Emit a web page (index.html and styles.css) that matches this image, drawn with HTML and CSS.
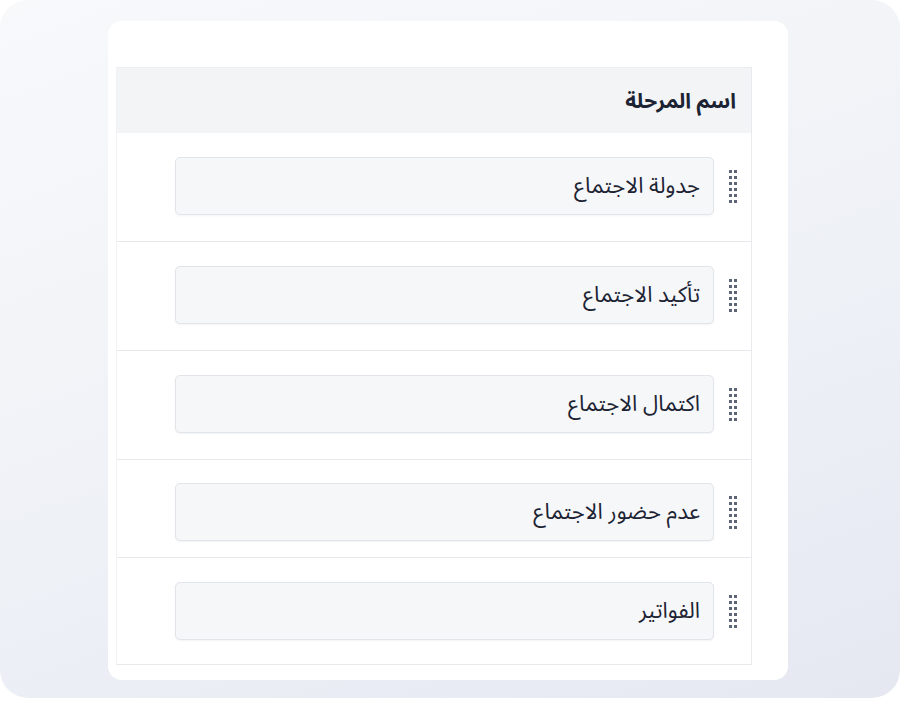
FILE: index.html
```html
<!DOCTYPE html>
<html lang="ar">
<head>
    <meta charset="UTF-8">
    <meta name="viewport" content="width=device-width, initial-scale=1.0">
    <title>المراحل</title>
    <link rel="stylesheet" href="styles.css">
</head>
<body>
    <div class="frame">
        <div class="card">
            <div class="stages" dir="rtl">
                <div class="stages-head">اسم المرحلة</div>

                <div class="stage-row">
                    <span class="handle">
                        <svg width="8" height="33" viewBox="0 0 8 33"><g fill="#5b6577"><rect x="0" y="0" width="3" height="3"/><rect x="5" y="0" width="3" height="3"/><rect x="0" y="6" width="3" height="3"/><rect x="5" y="6" width="3" height="3"/><rect x="0" y="12" width="3" height="3"/><rect x="5" y="12" width="3" height="3"/><rect x="0" y="18" width="3" height="3"/><rect x="5" y="18" width="3" height="3"/><rect x="0" y="24" width="3" height="3"/><rect x="5" y="24" width="3" height="3"/><rect x="0" y="30" width="3" height="3"/><rect x="5" y="30" width="3" height="3"/></g></svg>
                    </span>
                    <input type="text" class="stage-input" value="جدولة الاجتماع">
                </div>

                <div class="stage-row">
                    <span class="handle">
                        <svg width="8" height="33" viewBox="0 0 8 33"><g fill="#5b6577"><rect x="0" y="0" width="3" height="3"/><rect x="5" y="0" width="3" height="3"/><rect x="0" y="6" width="3" height="3"/><rect x="5" y="6" width="3" height="3"/><rect x="0" y="12" width="3" height="3"/><rect x="5" y="12" width="3" height="3"/><rect x="0" y="18" width="3" height="3"/><rect x="5" y="18" width="3" height="3"/><rect x="0" y="24" width="3" height="3"/><rect x="5" y="24" width="3" height="3"/><rect x="0" y="30" width="3" height="3"/><rect x="5" y="30" width="3" height="3"/></g></svg>
                    </span>
                    <input type="text" class="stage-input" value="تأكيد الاجتماع">
                </div>

                <div class="stage-row">
                    <span class="handle">
                        <svg width="8" height="33" viewBox="0 0 8 33"><g fill="#5b6577"><rect x="0" y="0" width="3" height="3"/><rect x="5" y="0" width="3" height="3"/><rect x="0" y="6" width="3" height="3"/><rect x="5" y="6" width="3" height="3"/><rect x="0" y="12" width="3" height="3"/><rect x="5" y="12" width="3" height="3"/><rect x="0" y="18" width="3" height="3"/><rect x="5" y="18" width="3" height="3"/><rect x="0" y="24" width="3" height="3"/><rect x="5" y="24" width="3" height="3"/><rect x="0" y="30" width="3" height="3"/><rect x="5" y="30" width="3" height="3"/></g></svg>
                    </span>
                    <input type="text" class="stage-input" value="اكتمال الاجتماع">
                </div>

                <div class="stage-row short">
                    <span class="handle">
                        <svg width="8" height="33" viewBox="0 0 8 33"><g fill="#5b6577"><rect x="0" y="0" width="3" height="3"/><rect x="5" y="0" width="3" height="3"/><rect x="0" y="6" width="3" height="3"/><rect x="5" y="6" width="3" height="3"/><rect x="0" y="12" width="3" height="3"/><rect x="5" y="12" width="3" height="3"/><rect x="0" y="18" width="3" height="3"/><rect x="5" y="18" width="3" height="3"/><rect x="0" y="24" width="3" height="3"/><rect x="5" y="24" width="3" height="3"/><rect x="0" y="30" width="3" height="3"/><rect x="5" y="30" width="3" height="3"/></g></svg>
                    </span>
                    <input type="text" class="stage-input" value="عدم حضور الاجتماع">
                </div>

                <div class="stage-row last">
                    <span class="handle">
                        <svg width="8" height="33" viewBox="0 0 8 33"><g fill="#5b6577"><rect x="0" y="0" width="3" height="3"/><rect x="5" y="0" width="3" height="3"/><rect x="0" y="6" width="3" height="3"/><rect x="5" y="6" width="3" height="3"/><rect x="0" y="12" width="3" height="3"/><rect x="5" y="12" width="3" height="3"/><rect x="0" y="18" width="3" height="3"/><rect x="5" y="18" width="3" height="3"/><rect x="0" y="24" width="3" height="3"/><rect x="5" y="24" width="3" height="3"/><rect x="0" y="30" width="3" height="3"/><rect x="5" y="30" width="3" height="3"/></g></svg>
                    </span>
                    <input type="text" class="stage-input" value="الفواتير">
                </div>
            </div>
        </div>
    </div>
</body>
</html>
```

FILE: styles.css
```css
body {
    margin: 0;
    padding: 0;
    background: #fff;
    font-family: "Noto Sans Arabic", "Noto Sans", "DejaVu Sans", sans-serif;
    color: #1c2333;
}
.frame {
    width: 900px;
    height: 698px;
    box-sizing: border-box;
    padding: 21px 0 0 108px;
    border-radius: 28px;
    background: linear-gradient(160deg, #f8f9fb 0%, #eef1f6 55%, #e5e8f1 100%);
}
.card {
    width: 680px;
    height: 659px;
    box-sizing: border-box;
    padding: 46px 36px 0 8px;
    background: #fff;
    border-radius: 14px;
}
.stages {
    border-right: 1px solid #e8eaee;
    border-left: 1px solid #f1f2f5;
}
.stages-head {
    height: 66px;
    box-sizing: border-box;
    padding: 0 15px;
    display: flex;
    align-items: center;
    background: #f3f4f6;
    border-top: 1px solid #eceef1;
    font-size: 21px;
    font-weight: bold;
}
.stage-row {
    display: flex;
    align-items: center;
    gap: 15px;
    padding: 24px 14px 26px 0;
    border-bottom: 1px solid #e6e8ec;
}
.stage-row.short {
    padding: 23px 14px 16px 0;
}
.stage-row.last {
    padding: 24px 14px 24px 0;
}
.handle {
    display: flex;
    width: 8px;
}
.stage-input {
    width: 539px;
    height: 58px;
    box-sizing: border-box;
    padding: 0 13px;
    border: 1px solid #e1e4e9;
    border-radius: 5px;
    background: #f6f7f9;
    box-shadow: 0 1px 2px rgba(20, 30, 60, 0.05);
    font-family: inherit;
    font-size: 22px;
    color: #1c2333;
    text-align: right;
}
```
